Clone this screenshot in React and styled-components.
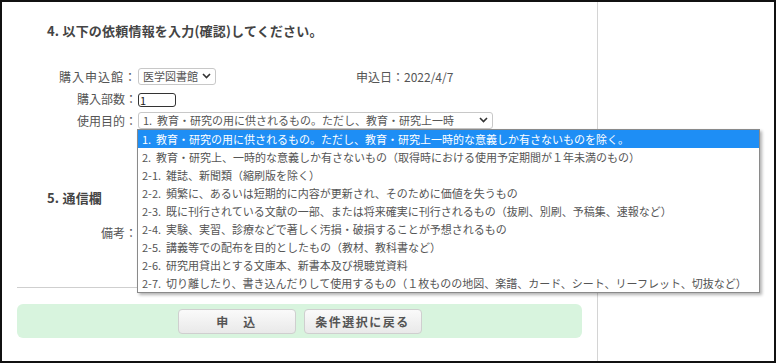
import React from "react";
import styled, { createGlobalStyle } from "styled-components";

const GlobalStyle = createGlobalStyle`
  html, body { margin: 0; padding: 0; background: #fff; }
  body { font-family: "Noto Sans CJK JP", "Noto Sans", sans-serif; color: #333; }
`;

const Frame = styled.div`
  width: 776px;
  height: 363px;
  box-sizing: border-box;
  border: 2px solid #111;
  display: flex;
  overflow: hidden;
`;

const Main = styled.div`
  width: 596px;
  flex: none;
  box-sizing: border-box;
  border-right: 1px solid #d4d4d4;
  padding-top: 19px;
  display: flex;
  flex-direction: column;
`;

const Side = styled.div`
  flex: 1;
`;

const Heading = styled.h3`
  margin: 0;
  padding-left: 45px;
  font-size: 13px;
  line-height: 20px;
  font-weight: bold;
  letter-spacing: 0.2px;
  color: #444;
  margin-top: ${(p) => p.$top || 0}px;
`;

const Form = styled.div`
  margin-top: 24px;
  display: flex;
  flex-direction: column;
`;

const Row = styled.div`
  display: flex;
  align-items: center;
  height: ${(p) => p.$h || 22}px;
`;

const Label = styled.div`
  width: 135px;
  flex: none;
  text-align: right;
  font-size: 12px;
  letter-spacing: ${(p) => p.$ls || 0}px;
  color: #555;
  white-space: nowrap;
`;

const Field = styled.div`
  position: relative;
  margin-left: 1px;
`;

const SelectBox = styled.div`
  box-sizing: border-box;
  width: ${(p) => p.$w}px;
  height: 17px;
  border: 1px solid #c8c8c8;
  border-radius: 3px;
  background: #fff;
  display: flex;
  align-items: center;
  padding: 0 4px;
  font-size: 11px;
  color: #555;
  white-space: pre;
  overflow: hidden;
`;

const SelectText = styled.span`
  flex: 1;
  overflow: hidden;
`;

const Chevron = () => (
  <svg width="9" height="6" viewBox="0 0 9 6" style={{ flex: "none" }}>
    <path d="M1 1l3.5 3.5L8 1" fill="none" stroke="#333" strokeWidth="1.6" />
  </svg>
);

const NumberInput = styled.input`
  box-sizing: border-box;
  width: 38px;
  height: 14px;
  border: 1px solid #333;
  border-radius: 3px;
  padding: 0 1px;
  font-family: inherit;
  font-size: 11px;
  color: #222;
  outline: none;
`;

const DateText = styled.div`
  margin-left: 140px;
  font-size: 12px;
  color: #555;
  white-space: nowrap;
`;

const List = styled.ul`
  position: absolute;
  top: 100%;
  left: -1px;
  z-index: 10;
  width: 623px;
  box-sizing: border-box;
  margin: 0;
  padding: 0;
  list-style: none;
  background: #fff;
  border: 1px solid #8a8a8a;
  box-shadow: 2px 2px 3px rgba(0, 0, 0, 0.3);
`;

const Option = styled.li`
  height: 18px;
  line-height: 18px;
  padding-left: 4px;
  font-size: 11px;
  white-space: pre;
  color: ${(p) => (p.$active ? "#fff" : "#555")};
  background: ${(p) => (p.$active ? "#1e8ef5" : "transparent")};
`;

const Divider = styled.hr`
  margin: 45px 0 0 15px;
  width: 565px;
  border: none;
  border-top: 1px solid #cfcfcf;
  height: 0;
`;

const ButtonBar = styled.div`
  margin: 16px 0 0 15px;
  width: 565px;
  height: 34px;
  border-radius: 6px;
  background: #d8f4de;
  display: flex;
  align-items: center;
  justify-content: center;
  gap: 8px;
  padding-top: 1px;
  box-sizing: border-box;
`;

const Button = styled.button`
  width: 118px;
  height: 25px;
  border: 1px solid #cfcfcf;
  border-radius: 4px;
  background: linear-gradient(#fafafa, #e9e9e9);
  font-family: inherit;
  font-size: 12px;
  font-weight: bold;
  letter-spacing: 1.5px;
  color: #555;
  padding: 0;
`;

const purposes = [
  "1.  教育・研究の用に供されるもの。ただし、教育・研究上一時的な意義しか有さないものを除く。",
  "2.  教育・研究上、一時的な意義しか有さないもの（取得時における使用予定期間が１年未満のもの）",
  "2-1.  雑誌、新聞類（縮刷版を除く）",
  "2-2.  頻繁に、あるいは短期的に内容が更新され、そのために価値を失うもの",
  "2-3.  既に刊行されている文献の一部、または将来確実に刊行されるもの（抜刷、別刷、予稿集、速報など）",
  "2-4.  実験、実習、診療などで著しく汚損・破損することが予想されるもの",
  "2-5.  講義等での配布を目的としたもの（教材、教科書など）",
  "2-6.  研究用貸出とする文庫本、新書本及び視聴覚資料",
  "2-7.  切り離したり、書き込んだりして使用するもの（１枚ものの地図、楽譜、カード、シート、リーフレット、切抜など）",
];

export default function App() {
  return (
    <>
      <GlobalStyle />
      <Frame>
        <Main>
          <Heading>4. 以下の依頼情報を入力(確認)してください。</Heading>
          <Form>
            <Row>
              <Label $ls={1}>購入申込館：</Label>
              <Field>
                <SelectBox $w={78}>
                  <SelectText>医学図書館</SelectText>
                  <Chevron />
                </SelectBox>
              </Field>
              <DateText>申込日：2022/4/7</DateText>
            </Row>
            <Row>
              <Label>購入部数：</Label>
              <Field>
                <NumberInput defaultValue="1" />
              </Field>
            </Row>
            <Row>
              <Label>使用目的：</Label>
              <Field>
                <SelectBox $w={355}>
                  <SelectText>1.  教育・研究の用に供されるもの。ただし、教育・研究上一時</SelectText>
                  <Chevron />
                </SelectBox>
                <List>
                  {purposes.map((t, i) => (
                    <Option key={i} $active={i === 0}>
                      {t}
                    </Option>
                  ))}
                </List>
              </Field>
            </Row>
          </Form>
          <Heading $top={57}>5. 通信欄</Heading>
          <Row $h={20} style={{ marginTop: 14 }}>
            <Label>備考：</Label>
          </Row>
          <Divider />
          <ButtonBar>
            <Button>申　込</Button>
            <Button>条件選択に戻る</Button>
          </ButtonBar>
        </Main>
        <Side />
      </Frame>
    </>
  );
}
